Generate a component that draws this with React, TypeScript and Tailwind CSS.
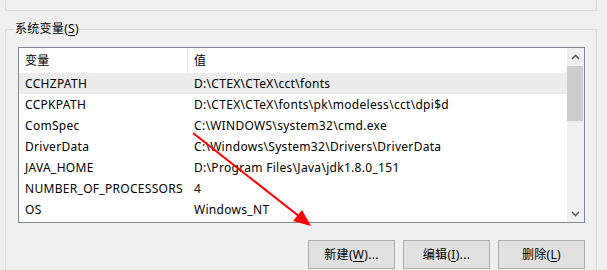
import React from 'react'

const rows: [string, string][] = [
  ['CCHZPATH', 'D:\\CTEX\\CTeX\\cct\\fonts'],
  ['CCPKPATH', 'D:\\CTEX\\CTeX\\fonts\\pk\\modeless\\cct\\dpi$d'],
  ['ComSpec', 'C:\\WINDOWS\\system32\\cmd.exe'],
  ['DriverData', 'C:\\Windows\\System32\\Drivers\\DriverData'],
  ['JAVA_HOME', 'D:\\Program Files\\Java\\jdk1.8.0_151'],
  ['NUMBER_OF_PROCESSORS', '4'],
  ['OS', 'Windows_NT'],
]

function Chevron({ up }: { up?: boolean }) {
  return (
    <svg width="9" height="6" viewBox="0 0 9 6" className={up ? '' : 'rotate-180'}>
      <path d="M1 5 L4.5 1.5 L8 5" fill="none" stroke="#606060" strokeWidth="1.6" />
    </svg>
  )
}

function Btn({ label, hot, rest }: { label: string; hot: string; rest: string }) {
  return (
    <button className="flex h-[29px] w-[87px] items-center justify-center border border-[#adadad] bg-[#e1e1e1] text-[12px] text-black">
      {label}(<span className="underline underline-offset-2">{hot}</span>){rest}
    </button>
  )
}

export default function App() {
  return (
    <div
      className="relative h-[270px] w-[607px] overflow-hidden bg-[#f0f0f0] text-[12px] tracking-[0.3px] text-black"
      style={{ fontFamily: '"Noto Sans", "Noto Sans CJK SC", sans-serif' }}
    >
      {/* upper group box (cut off) */}
      <div className="ml-[5px] h-[11px] w-[592px] border-x border-b border-[#dcdcdc]" />

      {/* 系统变量 group */}
      <fieldset className="ml-[5px] mt-[10px] w-[592px] border border-[#dcdcdc] pb-[20px]">
        <legend className="ml-[8px] px-[1px] leading-[16px]">
          系统变量(<span className="underline underline-offset-2">S</span>)
        </legend>

        <div className="ml-[12px] mt-[10px] flex h-[176px] w-[567px] border border-[#828790] bg-white">
          <div className="flex w-[548px] flex-col">
            <div className="flex h-[25px] shrink-0 items-center">
              <div className="w-[168px] pl-[6px]">变量</div>
              <div className="h-full w-px bg-[#e5e5e5]" />
              <div className="pl-[6px]">值</div>
            </div>
            {rows.map(([name, value], i) => (
              <div
                key={name}
                className={`flex h-[21px] shrink-0 items-center whitespace-nowrap ${i === 0 ? 'bg-[#ececec]' : ''}`}
              >
                <div className="w-[169px] pl-[6px]">{name}</div>
                <div className="pl-[6px]">{value}</div>
              </div>
            ))}
          </div>

          {/* scrollbar */}
          <div className="flex w-[17px] flex-col bg-[#f0f0f0]">
            <div className="flex h-[17px] items-center justify-center">
              <Chevron up />
            </div>
            <div className="mt-[1px] h-[55px] w-[16px] bg-[#cdcdcd]" />
            <div className="flex-1" />
            <div className="flex h-[17px] items-center justify-center">
              <Chevron />
            </div>
          </div>
        </div>

        <div className="mt-[17px] flex w-[579px] justify-end gap-[8px]">
          <Btn label="新建" hot="W" rest="..." />
          <Btn label="编辑" hot="I" rest="..." />
          <Btn label="删除" hot="L" rest="" />
        </div>
      </fieldset>

      {/* red annotation arrow */}
      <svg className="pointer-events-none absolute left-0 top-0" width="607" height="270">
        <line x1="193" y1="133" x2="300" y2="217" stroke="#ff0000" strokeWidth="2" />
        <polygon points="311,226 293,221 302,210" fill="#ff0000" />
      </svg>
    </div>
  )
}
